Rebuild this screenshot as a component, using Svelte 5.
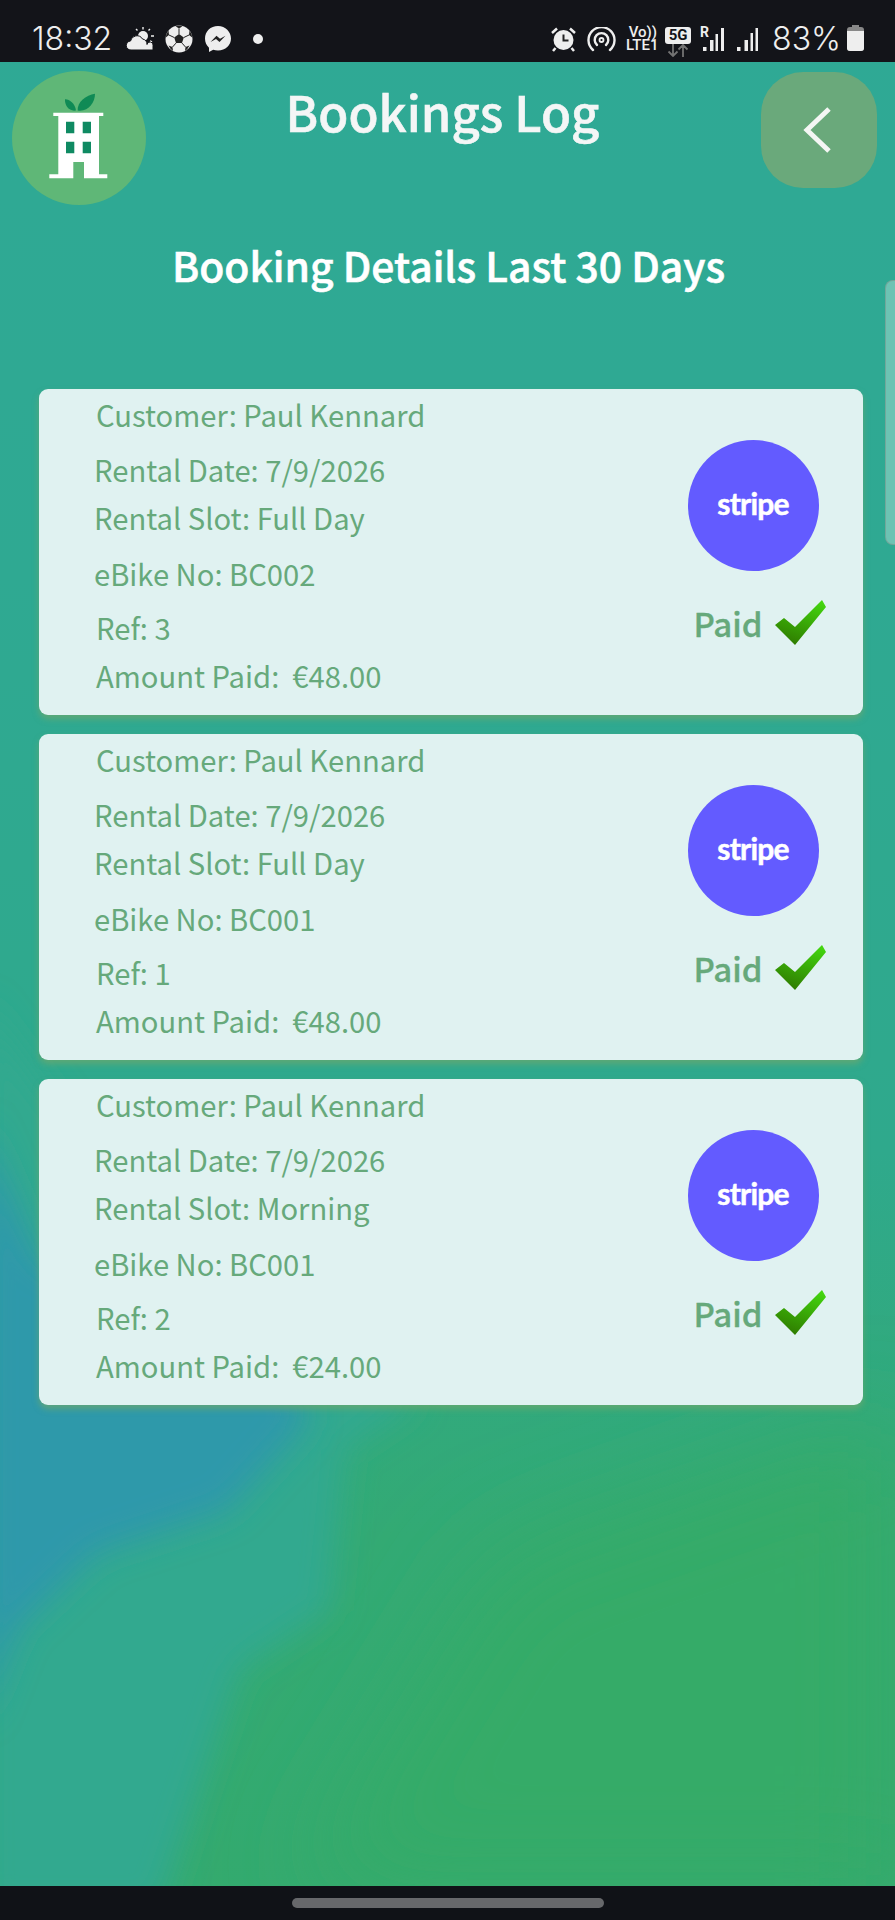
<script>
  const bookings = [
    { customer: "Paul Kennard", date: "7/9/2026", slot: "Full Day", bike: "BC002", ref: 3, amount: "48.00" },
    { customer: "Paul Kennard", date: "7/9/2026", slot: "Full Day", bike: "BC001", ref: 1, amount: "48.00" },
    { customer: "Paul Kennard", date: "7/9/2026", slot: "Morning", bike: "BC001", ref: 2, amount: "24.00" }
  ];
</script>

<div class="page">
  <!-- background wash -->
  <svg class="wash" viewBox="0 62 895 1824" aria-hidden="true">
    <defs>
      <filter id="soft" x="-30%" y="-30%" width="160%" height="160%"><feGaussianBlur stdDeviation="16" /></filter>
      <filter id="softer" x="-30%" y="-30%" width="160%" height="160%"><feGaussianBlur stdDeviation="50" /></filter>
    </defs>
    <path d="M500 1560 L895 1420 L895 1886 L300 1886 Z" fill="#35ab68" filter="url(#softer)" />
    <path d="M-20 1000 L200 1300 L420 1400 L345 1450 L330 1610 L240 1670 L160 1910 L-20 1910 Z" fill="#31a98f" filter="url(#soft)" />
    <path d="M-20 1120 L40 1260 L300 1390 L310 1420 L228 1510 L97 1553 L17 1628 L-20 1725 Z" fill="#2f99aa" filter="url(#soft)" />
  </svg>

  <header class="status">
    <div class="status-left">
      <span class="clock">18:32</span>
      <svg class="i-weather" width="28" height="24" viewBox="0 0 28 24">
        <circle cx="17" cy="9" r="5" fill="#eee" />
        <g stroke="#eee" stroke-width="1.400"><path d="M17 0v2.500M10 2l1.500 1.500M24 2l-1.500 1.500M25 9h3M24 14l2 1" /></g>
        <path d="M5 23a4.500 4.500 0 0 1-.5-9 6.500 6.500 0 0 1 12-2 5.500 5.500 0 0 1 4.500 5.500 3 3 0 0 1 6 1V23z" fill="#eee" stroke="#131419" stroke-width="1" />
      </svg>
      <svg class="i-ball" width="28" height="28" viewBox="0 0 28 28">
        <circle cx="14" cy="14" r="13.500" fill="#eee" />
        <path d="M14 9l4.800 3.500-1.800 5.600h-6l-1.800-5.600z" fill="#222" />
        <path d="M10.500 1.200L14 3.500l3.500-2.300A13.500 13.500 0 0 0 10.500 1.200zM24.500 5.500l-.5 4.500 3.300 2.500A13.500 13.500 0 0 0 24.500 5.500zM3.500 5.500L4 10 .7 12.500A13.500 13.500 0 0 1 3.500 5.500zM8 26l-.5-4-4-1.500A13.500 13.500 0 0 0 8 26zM20 26l.5-4 4-1.500A13.500 13.500 0 0 1 20 26z" fill="#222" />
        <path d="M14 3.500V9M9.200 12.500L4 10M18.800 12.500L24 10M11 18.100l-3.500 3.900M17 18.100l3.500 3.900" stroke="#222" stroke-width="1" />
      </svg>
      <svg class="i-msg" width="28" height="28" viewBox="0 0 28 28">
        <path d="M14 1C6.500 1 1 6.400 1 13.500c0 3.700 1.500 7 4 9.200V27l4.200-2.300c1.500.500 3.100.800 4.800.800 7.500 0 13-5.400 13-12S21.500 1 14 1z" fill="#eee" />
        <path d="M6.500 17l6-6.200 3.500 3 5.500-3-6 6.200-3.500-3z" fill="#222" />
      </svg>
      <span class="dot"></span>
    </div>
    <div class="status-right">
      <svg class="i-alarm" width="25" height="25" viewBox="0 0 25 25">
        <circle cx="12.500" cy="13" r="10" fill="#eee" />
        <path d="M12.500 7.500v6h5" fill="none" stroke="#222" stroke-width="2" />
        <path d="M1 6l5-4.500M24 6l-5-4.500M4.500 21L2 24M20.500 21l2.500 3" stroke="#eee" stroke-width="2.500" />
      </svg>
      <svg class="i-cast" width="29" height="25" viewBox="0 0 29 25">
        <g fill="none" stroke="#eee" stroke-width="2.400" stroke-linecap="round">
          <path d="M6 23a13 13 0 1 1 17 0" />
          <path d="M10 18a6.800 6.800 0 1 1 9 0" />
        </g>
        <circle cx="14.500" cy="13" r="2" fill="none" stroke="#eee" stroke-width="1.800" />
      </svg>
      <span class="volte">{"Vo))\nLTE1"}</span>
      <span class="net">
        <b>5G</b>
        <svg width="26" height="13" viewBox="0 0 26 13">
          <path d="M8 0v12M3.500 7.500L8 12l4.500-4.500M18 13V1M13.500 5.500L18 1l4.500 4.500" fill="none" stroke="#737373" stroke-width="1.800" />
        </svg>
      </span>
      <span class="signal"><em>R</em>
        <svg width="24" height="23" viewBox="0 0 24 23"><path d="M3 19h3.500v4H3zM10 12h3.500v11H10zM15.500 6H18v17h-2.500zM21 0h3v23h-3z" fill="#eee" /></svg>
      </span>
      <svg class="i-bars" width="21" height="23" viewBox="0 0 21 23"><path d="M0 19h3.500v4H0zM7.500 12H11v11H7.500zM13.500 5h2.500v18h-2.500zM18.500 0H21v23h-2.500z" fill="#eee" /></svg>
      <span class="pct">83%</span>
      <svg class="i-batt" width="17" height="26" viewBox="0 0 17 26">
        <path d="M5 0h7v3H5z" fill="#888" /><rect y="2" width="17" height="24" rx="3" fill="#888" />
        <path d="M0 6h17v17a3 3 0 0 1-3 3H3a3 3 0 0 1-3-3z" fill="#eee" />
      </svg>
    </div>
  </header>

  <main class="content">
    <div class="top">
      <div class="logo">
        <svg width="80" height="90" viewBox="-1 2 80 90">
          <path d="M36 19.500C35 12 29 8 25 8.300c-.5 6 4 12.500 11 11.200z" fill="#0f8a55" />
          <path d="M37.700 19.500C37 11 46 4 55 2.700c0 9-7 18.500-17.300 16.800z" fill="#0f8a55" />
          <path d="M13.300 21.700H63.300V25H59V83.300H67.300V87.300H44V71H33.300V87.300H9.300V83.300H18.300V25H13.300Z" fill="#fff" />
          <path d="M26 30.700h8.300v11.600H26zM42.700 30.700H51v11.600h-8.300zM26 50.700h8.300v11.600H26zM42.700 50.700H51v11.600h-8.300z" fill="#0f8a62" />
        </svg>
      </div>
      <h1>Bookings Log</h1>
      <button class="back" aria-label="Back">
        <svg width="28" height="46" viewBox="0 0 28 46"><path d="M26 2L4 23l22 21" fill="none" stroke="#f4f6f4" stroke-width="5" /></svg>
      </button>
    </div>

    <h2>Booking Details Last 30 Days</h2>

    <div class="cards">
      {#each bookings as b}
        <article class="card">
          <div class="details">
            <p class="customer">Customer: {b.customer}</p>
            <p class="date">Rental Date: {b.date}</p>
            <p class="slot">Rental Slot: {b.slot}</p>
            <p class="bike">eBike No: {b.bike}</p>
            <p class="ref">Ref: {b.ref}</p>
            <p class="amount">Amount Paid:&nbsp; €{b.amount}</p>
          </div>
          <div class="pay">
            <div class="stripe">stripe</div>
            <div class="paid">
              <span>Paid</span>
              <svg width="51" height="46" viewBox="0 0 51 46">
                <defs>
                  <linearGradient id="tick" x1="0.4" y1="1" x2="0.8" y2="0">
                    <stop offset="0" stop-color="#2f7d00" /><stop offset="1" stop-color="#43d60f" />
                  </linearGradient>
                </defs>
                <path d="M0 25L9 18L20 27L47 0L51 7L20 45Z" fill="url(#tick)" />
              </svg>
            </div>
          </div>
        </article>
      {/each}
    </div>
  </main>

  <div class="scrollbar"></div>

  <footer class="nav"><span class="pill"></span></footer>
</div>

<style>
  :global(body) {
    margin: 0;
    background: #12141a;
  }

  .page {
    position: relative;
    width: 895px;
    height: 1920px;
    overflow: hidden;
    display: flex;
    flex-direction: column;
    font-family: "Noto Sans CJK JP", "Noto Sans", sans-serif;
    background: linear-gradient(180deg, #2fa995 0%, #2fa992 30%, #2fa98c 60%, #33aa74 80%, #34aa6e 100%);
  }

  .wash {
    position: absolute;
    left: 0;
    top: 62px;
    width: 895px;
    height: 1824px;
  }

  .status {
    position: relative;
    height: 62px;
    flex: none;
    background: #131419;
    color: #eee;
    display: flex;
    justify-content: space-between;
    padding: 0 31px 0 32px;
    box-sizing: border-box;
    font-family: Roboto, sans-serif;
  }

  .status-left,
  .status-right {
    display: flex;
    align-items: center;
    padding-top: 16px;
  }

  .clock,
  .pct {
    font-family: Inter, sans-serif;
    font-size: 32px;
    font-weight: 300;
    line-height: 1;
  }

  .clock { width: 94px; }
  .i-ball { margin-left: 11px; }
  .i-msg { margin-left: 11px; }

  .dot {
    width: 10px;
    height: 10px;
    border-radius: 50%;
    background: #eee;
    margin-left: 21px;
  }

  .i-cast { margin-left: 11px; }

  .volte {
    width: 31px;
    margin-left: 10px;
    font-size: 15px;
    font-weight: 500;
    line-height: 13px;
    white-space: pre-line;
    text-align: right;
  }

  .net {
    display: flex;
    flex-direction: column;
    align-items: center;
    width: 26px;
    margin: 6px 0 0 8px;
  }

  .net b {
    width: 26px;
    text-align: center;
    background: #eee;
    color: #131419;
    font-size: 15px;
    line-height: 17px;
    border-radius: 3px;
  }

  .signal {
    position: relative;
    display: block;
    height: 23px;
    margin-left: 9px;
  }

  .signal em {
    position: absolute;
    left: 0;
    top: -3px;
    font-style: normal;
    font-size: 14px;
    font-weight: 700;
    line-height: 14px;
  }

  .i-bars { margin-left: 13px; }
  .pct { margin-left: 14px; }
  .i-batt { margin-left: 6px; margin-top: -2px; }

  .content {
    position: relative;
    flex: 1;
    min-height: 0;
  }

  .top {
    position: relative;
    height: 148px;
    display: flex;
    justify-content: space-between;
    padding: 9px 18px 0 12px;
    box-sizing: border-box;
  }

  .logo {
    width: 134px;
    height: 134px;
    border-radius: 50%;
    background: #5fb777;
    display: flex;
    align-items: center;
    justify-content: center;
  }

  h1 {
    margin: 0 22px 0 0;
    font-size: 49px;
    font-weight: 500;
    color: #f4f6f6;
    line-height: 60px;
    padding-top: 10px;
    -webkit-text-stroke: 0.6px #f4f6f6;
  }

  .back {
    width: 116px;
    height: 116px;
    border: 0;
    padding: 0 4px 0 0;
    margin-top: 1px;
    border-radius: 42px;
    background: #6aa97b;
    display: flex;
    align-items: center;
    justify-content: center;
  }

  h2 {
    margin: 0;
    text-align: center;
    font-size: 40.8px;
    font-weight: 500;
    color: #fff;
    line-height: 60px;
    padding: 25px 0 0 2px;
    -webkit-text-stroke: 0.6px #fff;
  }

  .cards {
    display: flex;
    flex-direction: column;
    gap: 19px;
    margin: 94px 32px 0 39px;
  }

  .card {
    height: 326px;
    background: #e0f2f1;
    border-radius: 9px;
    box-shadow: 0 4px 6px rgba(110, 168, 110, 0.75);
    display: flex;
    justify-content: space-between;
  }

  .details p {
    margin: 0;
    font-size: 29.2px;
    line-height: 40px;
    color: #66a97b;
    white-space: nowrap;
  }

  .details .customer { padding: 5px 0 0 57px; }
  .details .date { padding: 15px 0 0 55px; }
  .details .slot { padding: 8px 0 0 55px; }
  .details .bike { padding: 16px 0 0 55px; }
  .details .ref { padding: 14px 0 0 57px; }
  .details .amount { padding: 8px 0 0 57px; }

  .pay {
    width: 180px;
    display: flex;
    flex-direction: column;
    align-items: center;
    padding-top: 51px;
  }

  .stripe {
    width: 131px;
    height: 131px;
    box-sizing: border-box;
    padding-bottom: 5px;
    border-radius: 50%;
    background: #635bff;
    color: #fff;
    font-family: Lato, sans-serif;
    font-size: 30px;
    font-weight: 700;
    letter-spacing: -0.8px;
    -webkit-text-stroke: 0.5px #fff;
    display: flex;
    align-items: center;
    justify-content: center;
    margin-right: 40px;
  }

  .paid {
    display: flex;
    align-items: center;
    gap: 12px;
    margin-top: 29px;
    margin-right: 27px;
    color: #66a97b;
    font-size: 33px;
    font-weight: 500;
    line-height: 46px;
    -webkit-text-stroke: 0.3px #66a97b;
  }

  .scrollbar {
    position: absolute;
    right: 0;
    top: 280px;
    width: 10px;
    height: 265px;
    background: rgba(255, 255, 255, 0.3);
    border: 1px solid rgba(120, 140, 130, 0.5);
    border-right: 0;
    border-radius: 8px 0 0 8px;
    box-sizing: border-box;
  }

  .nav {
    position: relative;
    height: 34px;
    flex: none;
    background: #101217;
    display: flex;
    justify-content: center;
    align-items: center;
  }

  .pill {
    width: 312px;
    height: 10px;
    border-radius: 5px;
    background: #67686b;
  }
</style>
